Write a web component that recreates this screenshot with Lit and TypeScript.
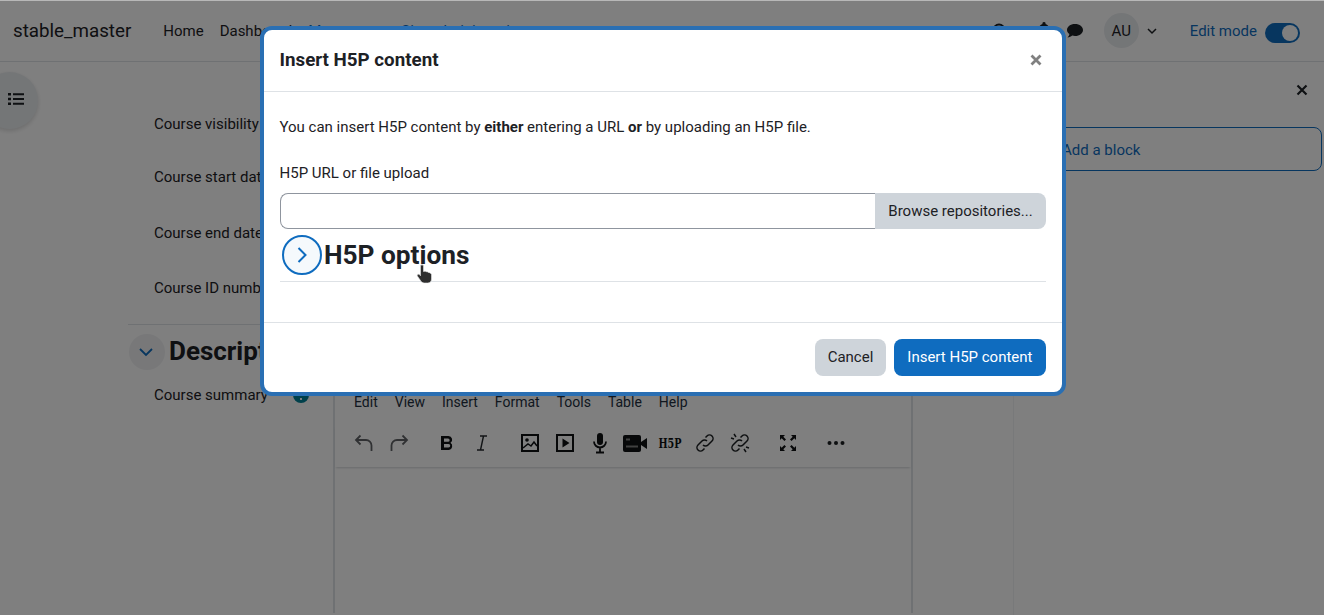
import { LitElement, html, svg, css } from "lit";
import { customElement } from "lit/decorators.js";

const toolbarGroups = [
  [
    svg`<path d="M8.500 4.500 4 9l4.500 4.500M4 9h10a5.500 5.500 0 0 1 5.500 5.500V20" fill="none" stroke="#606366" stroke-width="1.800"/>`,
    svg`<path d="M15.500 4.500 20 9l-4.500 4.500M20 9H10a5.500 5.500 0 0 0-5.500 5.500V20" fill="none" stroke="#606366" stroke-width="1.800"/>`,
  ],
  [
    svg`<path d="M6 5h7.500a3.700 3.700 0 0 1 2 6.800A4 4 0 0 1 14 19H6zM9 7.500v3.300h4a1.650 1.650 0 0 0 0-3.300zM9 13v3.500h4.500a1.750 1.750 0 0 0 0-3.500z" fill="#0e1012" fill-rule="evenodd"/>`,
    svg`<path d="M10 5h7M7 19h7M13.500 5l-3 14" fill="none" stroke="#24282c" stroke-width="1.400"/>`,
  ],
  [
    svg`<path d="M4 4h16v16H4z" fill="none" stroke="#0e1012" stroke-width="2"/><circle cx="9" cy="9" r="1.800" fill="#0e1012"/><path d="m5 17 5-4 3 2 3-4 3 4" fill="none" stroke="#0e1012" stroke-width="1.500"/>`,
    svg`<path d="M4 4h16v16H4z" fill="none" stroke="#0e1012" stroke-width="2"/><path d="M9.500 7.500v9l7-4.500z" fill="#0e1012"/>`,
    svg`<rect x="9" y="2" width="6" height="12" rx="3" fill="#0e1012"/><path d="M6 10.500a6 6 0 0 0 12 0M12 17v4M8 21.500h8" fill="none" stroke="#0e1012" stroke-width="1.800"/>`,
    svg`<rect x="0" y="4" width="18" height="17" rx="2" fill="#0e1012"/><path d="m18 11 6-4v11l-6-4z" fill="#0e1012"/><path d="M3 8.500h4M3 15.500h12" stroke="#808080" stroke-width="2"/>`,
    svg`<text x="12" y="16.500" text-anchor="middle" font-family="DejaVu Serif" font-weight="700" font-size="13" fill="#0e1012" textLength="23" lengthAdjust="spacingAndGlyphs">H5P</text>`,
    svg`<path d="M10 14a3.500 3.500 0 0 0 5 0l4-4a3.500 3.500 0 0 0-5-5l-1.500 1.500M14 10a3.500 3.500 0 0 0-5 0l-4 4a3.500 3.500 0 0 0 5 5l1.500-1.500" fill="none" stroke="#1b1e21" stroke-width="1.500"/>`,
    svg`<path d="M10 14a3.500 3.500 0 0 0 5 0l4-4a3.500 3.500 0 0 0-5-5l-1.500 1.500M14 10a3.500 3.500 0 0 0-5 0l-4 4a3.500 3.500 0 0 0 5 5l1.500-1.500M6 3l2 3M3 7l3 1M18 21l-2-3M21 17l-3-1" fill="none" stroke="#1b1e21" stroke-width="1.500"/>`,
  ],
  [
    svg`<path d="M4 4h5L7.300 5.700 10 8.400 8.400 10 5.700 7.300 4 9zM20 4v5l-1.700-1.700L15.600 10 14 8.400l2.700-2.700L15 4zM4 20v-5l1.700 1.700L8.400 14l1.600 1.600-2.700 2.700L9 20zM20 20h-5l1.700-1.700L14 15.600l1.600-1.600 2.700 2.700L20 15z" fill="#0e1012"/>`,
  ],
  [svg`<circle cx="5.500" cy="12" r="2" fill="#1b1e21"/><circle cx="12" cy="12" r="2" fill="#1b1e21"/><circle cx="18.500" cy="12" r="2" fill="#1b1e21"/>`],
];

@customElement("app-root")
export class AppRoot extends LitElement {
  static styles = css`
    :host {
      display: block;
      height: 615px;
      overflow: hidden;
      position: relative;
      background: #fff;
      color: #1d2125;
      font-family: Roboto, "Liberation Sans", sans-serif;
      font-size: 15px;
    }

    .navbar {
      display: flex;
      align-items: center;
      height: 62px;
      box-sizing: border-box;
      padding-left: 13px;
      border-bottom: 1px solid #dee2e6;
    }
    .brand {
      font-size: 18.75px;
      margin-right: 32px;
    }
    .nav-links {
      display: flex;
      gap: 16px;
    }
    .nav-links .blue {
      color: #0f6cbf;
    }
    .nav-icons {
      display: flex;
      align-items: center;
      margin-left: auto;
      padding-right: 24px;
    }
    .nav-icons svg {
      display: block;
    }
    .avatar {
      width: 35px;
      height: 35px;
      border-radius: 50%;
      background: #e9ecef;
      display: flex;
      align-items: center;
      justify-content: center;
      margin: 0 7px 0 20px;
      font-size: 15px;
    }
    .edit-label {
      color: #0f6cbf;
      margin: 0 8px 0 32px;
    }
    .switch {
      width: 35px;
      height: 20px;
      margin-top: 4px;
      border-radius: 10px;
      background: #0f6cbf;
      display: flex;
      justify-content: flex-end;
      align-items: center;
      padding-right: 2px;
      box-sizing: border-box;
    }
    .switch i {
      width: 16px;
      height: 16px;
      border-radius: 50%;
      background: #fff;
    }

    .layout {
      display: flex;
      height: 553px;
    }
    .main {
      width: 1014px;
      box-sizing: border-box;
      padding: 0 0 0 128px;
      border-right: 1px solid #f1f3f5;
    }
    .form-row {
      display: flex;
      align-items: center;
      height: 22px;
      padding-left: 26px;
    }
    .form-row.visibility { margin-top: 51px; }
    .form-row.start { margin-top: 31px; }
    .form-row.end { margin-top: 34px; }
    .form-row.idnum { margin-top: 33px; }
    .section {
      margin-top: 25px;
      border-top: 1px solid #dee2e6;
      display: flex;
      align-items: center;
      gap: 4px;
      height: 52px;
      padding: 1px 0 0 1px;
    }
    .section h3 {
      margin: -3px 0 0;
      font-size: 26px;
      font-weight: 700;
    }
    .collapse-btn {
      width: 36px;
      height: 36px;
      border-radius: 50%;
      background: #f0f1f3;
      display: flex;
      align-items: center;
      justify-content: center;
      padding-right: 2px;
      box-sizing: border-box;
    }
    .summary {
      display: flex;
      padding-left: 26px;
      margin-top: 6px;
    }
    .summary .label {
      width: 139px;
      height: 22px;
      line-height: 22px;
    }
    .help {
      width: 16px;
      height: 16px;
      border-radius: 50%;
      background: #008196;
      margin-top: 3px;
      display: flex;
      justify-content: center;
      align-items: flex-end;
    }
    .help i {
      width: 2px;
      height: 2px;
      margin-bottom: 3px;
      background: #fff;
    }
    .editor {
      margin-left: 24px;
      width: 580px;
      height: 240px;
      border: solid #dee2e6;
      border-width: 0 2px;
      box-sizing: border-box;
      margin-top: -11px;
    }
    .menu {
      display: flex;
      padding: 18px 0 0 19px;
      font-size: 14px;
      height: 22px;
      color: #222f3e;
      align-items: center;
    }
    .menu span {
      margin-right: 17px;
    }
    .toolbar {
      display: flex;
      gap: 13px;
      margin-top: 12px;
      padding: 0 0 7px 11.500px;
      height: 35px;
      box-shadow: 0 2px 2px -1px rgba(34, 47, 62, 0.2);
    }
    .tgroup {
      display: flex;
    }
    .tbtn {
      width: 35px;
      height: 35px;
      display: flex;
      align-items: center;
      justify-content: center;
    }
    .tbtn svg {
      overflow: visible;
    }

    .drawer {
      flex: 1;
      padding: 20px 2px 0 16px;
      display: flex;
      flex-direction: column;
    }
    .drawer-close {
      align-self: flex-end;
      margin: 0 14px 0 0;
      height: 20px;
    }
    .add-block {
      margin-top: 25px;
      height: 44px;
      box-sizing: border-box;
      border: 1px solid #0f6cbf;
      border-radius: 8px;
      color: #0f6cbf;
      display: flex;
      align-items: center;
      padding: 1px 0 0 31px;
    }

    .toggle-tab {
      position: absolute;
      left: -19px;
      top: 72px;
      width: 57px;
      height: 57px;
      border-radius: 50%;
      background: #e9ecef;
      box-shadow: 0 2px 4px rgba(0, 0, 0, 0.15);
      display: flex;
      align-items: center;
      justify-content: center;
      padding: 0 0 3px 13px;
      box-sizing: border-box;
    }

    .backdrop {
      position: absolute;
      inset: 1px 0 0 0;
      background: rgba(0, 0, 0, 0.5);
    }
    .topline {
      position: absolute;
      inset: 0 0 auto 0;
      height: 1px;
      background: #b8b8b8;
    }

    .modal {
      position: absolute;
      left: 260px;
      top: 26px;
      width: 806px;
      height: 370px;
      box-sizing: border-box;
      background: #fff;
      border: 4px solid #2a6fb3;
      border-radius: 12px;
      display: flex;
      flex-direction: column;
    }
    .modal-header {
      height: 62px;
      box-sizing: border-box;
      border-bottom: 1px solid #dee2e6;
      display: flex;
      align-items: center;
      justify-content: space-between;
      padding: 0 20px 1px 15.500px;
    }
    .modal-header h5 {
      margin: 0;
      font-size: 18.75px;
      font-weight: 700;
    }
    .modal-body {
      flex: 1;
      padding: 0 16px;
    }
    .intro {
      margin: 0 0 0 -0.5px;
      padding-top: 25px;
      line-height: 20px;
      font-size: 15px;
    }
    .field-label {
      margin: 26px 0 0 -0.5px;
      line-height: 20px;
    }
    .picker {
      display: flex;
      margin-top: 10px;
      height: 36px;
    }
    .picker .input {
      flex: 1;
      box-sizing: border-box;
      border: 1px solid #8f959e;
      border-right: 0;
      border-radius: 8px 0 0 8px;
    }
    .picker .browse {
      width: 171px;
      background: #ced4da;
      border-radius: 0 8px 8px 0;
      display: flex;
      align-items: center;
      justify-content: center;
    }
    .options {
      display: flex;
      align-items: center;
      gap: 2px;
      height: 52px;
      padding-left: 2px;
      border-bottom: 1px solid #dee2e6;
    }
    .options .circle {
      width: 40px;
      height: 40px;
      box-sizing: border-box;
      border-radius: 50%;
      border: 2px solid #0f6cbf;
      background: #f5f9fc;
      display: flex;
      align-items: center;
      justify-content: center;
      margin-top: -1px;
    }
    .options h3 {
      margin: 0;
      font-size: 26.25px;
      font-weight: 700;
    }
    .modal-footer {
      height: 70px;
      box-sizing: border-box;
      border-top: 1px solid #dee2e6;
      display: flex;
      align-items: center;
      justify-content: flex-end;
      gap: 8px;
      padding-right: 16px;
    }
    .btn {
      height: 37px;
      box-sizing: border-box;
      border-radius: 8px;
      display: flex;
      align-items: center;
      padding: 0 13.500px 1px;
    }
    .btn.secondary {
      background: #ced4da;
      padding: 0 12.500px 1px;
    }
    .btn.primary {
      background: #0f6cbf;
      color: #fff;
    }
    .pointer {
      position: absolute;
      left: 416px;
      top: 264px;
    }
  `;

  private _toolbar() {
    return toolbarGroups.map(
      (group) => html`
        <div class="tgroup">
          ${group.map(
            (icon) => html`
              <div class="tbtn">
                <svg width="24" height="24" viewBox="0 0 24 24">${icon}</svg>
              </div>
            `
          )}
        </div>
      `
    );
  }

  protected render() {
    return html`
      <div class="topline"></div>
      <header class="navbar">
        <span class="brand">stable_master</span>
        <nav class="nav-links">
          <span>Home</span>
          <span>Dashboard</span>
          <span class="blue">My courses</span>
          <span class="blue">Site administration</span>
        </nav>
        <div class="nav-icons">
          <svg width="16" height="16" viewBox="0 0 16 16" style="margin-right:28px">
            <circle cx="7" cy="7" r="5.500" fill="none" stroke="#1d2125" stroke-width="2"/>
            <path d="m11 11 4 4" stroke="#1d2125" stroke-width="2"/>
          </svg>
          <svg width="16" height="18" viewBox="0 0 16 18" style="margin-right:14px">
            <path d="M8 0a1.500 1.500 0 0 1 1.500 2A5 5 0 0 1 13 7c0 4 2 5 2 6H1c0-1 2-2 2-6a5 5 0 0 1 3.500-5A1.500 1.500 0 0 1 8 0z" fill="#1d2125"/>
          </svg>
          <svg width="18" height="16" viewBox="0 0 18 16">
            <path d="M9 1c4.700 0 8 2.700 8 6s-3.300 6-8 6c-1 0-2-.1-2.800-.4C5 13.700 3.500 14.500 1.500 14.500 2.800 13.300 3.300 12 3.400 11 2 10 1 8.600 1 7c0-3.300 3.300-6 8-6z" fill="#1d2125"/>
          </svg>
          <div class="avatar">AU</div>
          <svg width="12" height="12" viewBox="0 0 12 12">
            <path d="m2 4 4 4 4-4" fill="none" stroke="#1d2125" stroke-width="1.500"/>
          </svg>
          <span class="edit-label">Edit mode</span>
          <div class="switch"><i></i></div>
        </div>
      </header>

      <div class="layout">
        <main class="main">
          <div class="form-row visibility">Course visibility</div>
          <div class="form-row start">Course start date</div>
          <div class="form-row end">Course end date</div>
          <div class="form-row idnum">Course ID number</div>
          <section class="section">
            <div class="collapse-btn">
              <svg width="16" height="16" viewBox="0 0 16 16">
                <path d="m2 5 6 6 6-6" fill="none" stroke="#0f6cbf" stroke-width="1.800"/>
              </svg>
            </div>
            <h3>Description</h3>
          </section>
          <div class="summary">
            <div class="label">Course summary</div>
            <div class="help"><i></i></div>
            <div class="editor">
              <div class="menu">
                <span>Edit</span><span>View</span><span>Insert</span><span>Format</span><span>Tools</span><span>Table</span><span>Help</span>
              </div>
              <div class="toolbar">${this._toolbar()}</div>
            </div>
          </div>
        </main>
        <aside class="drawer">
          <div class="drawer-close">
            <svg width="12" height="12" viewBox="0 0 12 12">
              <path d="m1.500 1.500 9 9m0-9-9 9" stroke="#1d2125" stroke-width="2.200"/>
            </svg>
          </div>
          <div class="add-block">Add a block</div>
        </aside>
      </div>

      <div class="toggle-tab">
        <svg width="16" height="14" viewBox="0 0 16 14">
          <path d="M0 1h3v2.500H0zM0 5.700h3v2.500H0zM0 10.500h3V13H0zM5 1.300h11v2H5zM5 6h11v2H5zM5 10.800h11v2H5z" fill="#1d2125"/>
        </svg>
      </div>

      <div class="backdrop"></div>

      <div class="modal">
        <div class="modal-header">
          <h5>Insert H5P content</h5>
          <svg width="12" height="12" viewBox="0 0 12 12">
            <path d="m1.500 1.500 9 9m0-9-9 9" stroke="#808080" stroke-width="2.800"/>
          </svg>
        </div>
        <div class="modal-body">
          <p class="intro">
            You can insert H5P content by <b>either</b> entering a URL <b>or</b> by uploading an H5P file.
          </p>
          <div class="field-label">H5P URL or file upload</div>
          <div class="picker">
            <div class="input"></div>
            <div class="browse">Browse repositories...</div>
          </div>
          <div class="options">
            <div class="circle">
              <svg width="16" height="16" viewBox="0 0 16 16">
                <path d="m4.500 1 7 7-7 7" fill="none" stroke="#0f6cbf" stroke-width="2"/>
              </svg>
            </div>
            <h3>H5P options</h3>
          </div>
        </div>
        <div class="modal-footer">
          <div class="btn secondary">Cancel</div>
          <div class="btn primary">Insert H5P content</div>
        </div>
      </div>

      <svg class="pointer" width="18" height="20" viewBox="0 0 18 20">
        <path d="M4.500 2c0-1.600 3-1.600 3 0v5.500l1.500-.3c.7-.1 1.300.2 1.500.7.800-.3 1.500 0 1.800.6.800-.2 1.500.1 1.800.7.700 0 1.400.6 1.400 1.500V15c0 2.500-1.500 4-4 4H8.500c-2 0-3.200-1-4.200-2.800L1.300 12c-.7-1.400 1.100-2.500 2.100-1.400l1.100 1.200z" fill="#2d2d2d" stroke="#e8e8e8" stroke-width=".6"/>
      </svg>
    `;
  }
}
